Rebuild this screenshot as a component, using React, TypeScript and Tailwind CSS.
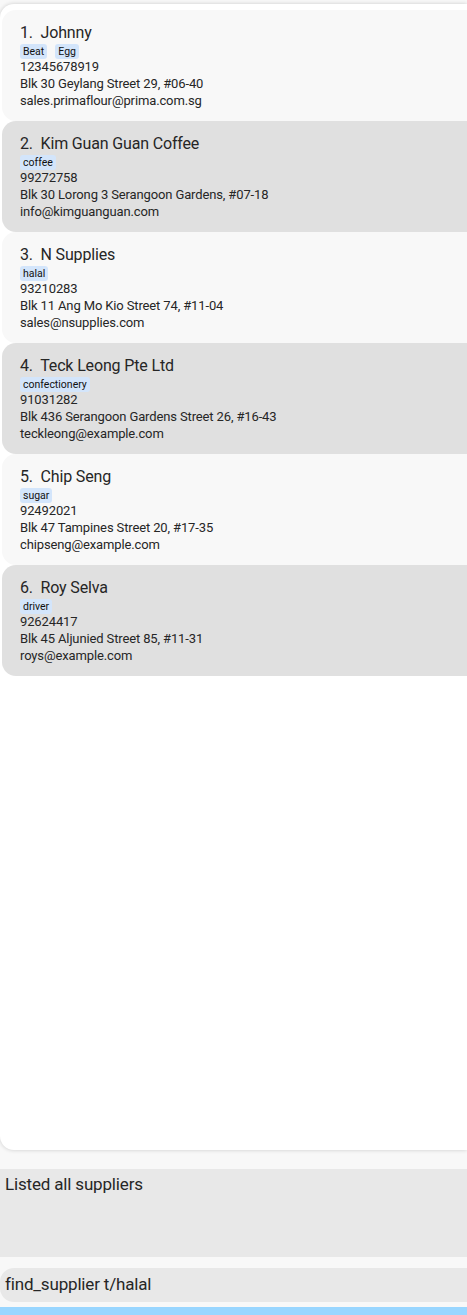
const suppliers = [
  { name: "Johnny", tags: ["Beat", "Egg"], phone: "12345678919", address: "Blk 30 Geylang Street 29, #06-40", email: "sales.primaflour@prima.com.sg" },
  { name: "Kim Guan Guan Coffee", tags: ["coffee"], phone: "99272758", address: "Blk 30 Lorong 3 Serangoon Gardens, #07-18", email: "info@kimguanguan.com" },
  { name: "N Supplies", tags: ["halal"], phone: "93210283", address: "Blk 11 Ang Mo Kio Street 74, #11-04", email: "sales@nsupplies.com" },
  { name: "Teck Leong Pte Ltd", tags: ["confectionery"], phone: "91031282", address: "Blk 436 Serangoon Gardens Street 26, #16-43", email: "teckleong@example.com" },
  { name: "Chip Seng", tags: ["sugar"], phone: "92492021", address: "Blk 47 Tampines Street 20, #17-35", email: "chipseng@example.com" },
  { name: "Roy Selva", tags: ["driver"], phone: "92624417", address: "Blk 45 Aljunied Street 85, #11-31", email: "roys@example.com" },
];

function SupplierCard({ index, s }: { index: number; s: (typeof suppliers)[number] }) {
  const odd = index % 2 === 0;
  return (
    <div className={`rounded-l-[14px] pl-[18px] pt-[13px] h-[111px] ${odd ? "bg-[#f8f8f8]" : "bg-[#e0e0e0]"}`}>
      <div className="text-[16px] leading-[20px] text-[#262626] whitespace-pre tracking-[-0.01em]">
        {index + 1}.  {s.name}
      </div>
      <div className="flex gap-[8px] mt-[1px] h-[14px] items-center">
        {s.tags.map((t) => (
          <span key={t} className="bg-[#d3e5fb] text-[#111] text-[10.5px] leading-[15px] px-[3px] rounded-[3px]">
            {t}
          </span>
        ))}
      </div>
      <div className="text-[13px] leading-[17px] text-[#262626] tracking-[-0.01em]">
        <div>{s.phone}</div>
        <div>{s.address}</div>
        <div>{s.email}</div>
      </div>
    </div>
  );
}

export default function App() {
  return (
    <div className="h-[1315px] w-[467px] overflow-hidden flex flex-col bg-[#f8f8f8] font-['Roboto','Liberation_Sans',sans-serif]">
      <div className="mt-1 h-[1146px] bg-white rounded-l-[14px] shadow-[0_0_4px_rgba(0,0,0,0.18)] pt-[6px] pl-[2px]">
        {suppliers.map((s, i) => (
          <SupplierCard key={s.name} index={i} s={s} />
        ))}
      </div>
      <div className="mt-[19px] h-[88px] bg-[#e8e8e8] px-[5px] pt-[4px] text-[17px] leading-[22px] text-[#262626] tracking-[-0.01em]">
        Listed all suppliers
      </div>
      <div className="mt-[11px] h-[34px] bg-[#e8e8e8] rounded-l-[14px] px-[5px] flex items-center text-[17px] text-[#262626] tracking-[-0.01em]">
        find_supplier t/halal
      </div>
      <div className="mt-[5px] h-[8px] bg-[#99d6ff]" />
    </div>
  );
}
